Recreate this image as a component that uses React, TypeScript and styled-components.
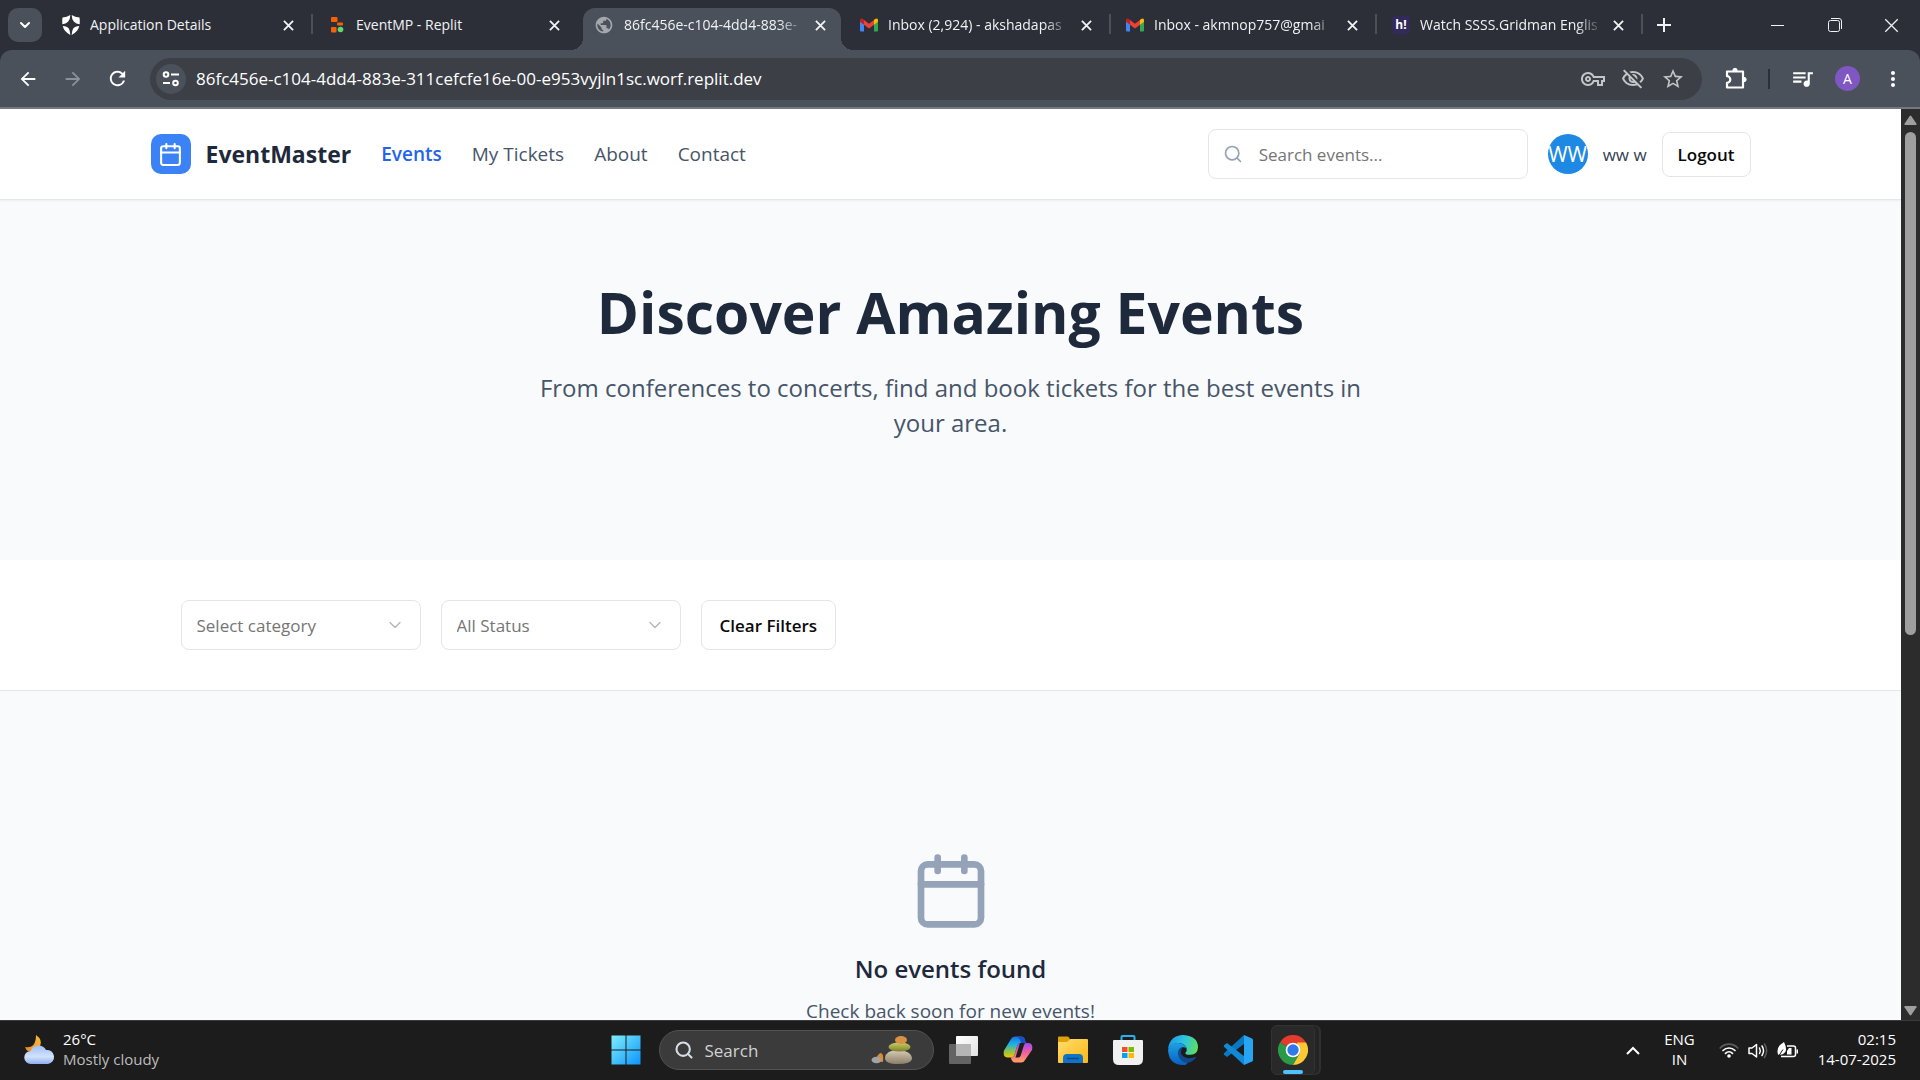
import React from "react";
import styled, { createGlobalStyle, css } from "styled-components";
import { Calendar, Search, ChevronDown } from "lucide-react";
import {
  MdArrowBack,
  MdArrowForward,
  MdRefresh,
  MdStarBorder,
  MdOutlineVisibilityOff,
  MdOutlineVpnKey,
  MdQueueMusic,
  MdMoreVert,
  MdPublic,
} from "react-icons/md";

const GlobalStyle = createGlobalStyle`
  *, *::before, *::after { box-sizing: border-box; }
  body {
    margin: 0;
    background: #1c1c1c;
    font-family: "Open Sans", "Noto Sans", sans-serif;
  }
  button, input, select { font-family: inherit; margin: 0; }
  h1, h2, p { margin: 0; }
  svg { display: block; flex-shrink: 0; }
`;

const Screen = styled.div`
  display: flex;
  flex-direction: column;
  height: 100vh;
  overflow: hidden;
`;

/* ---------- browser: tab strip ---------- */

const TabStrip = styled.div`
  display: flex;
  align-items: stretch;
  height: 50px;
  padding-left: 8px;
  background: #2d2f38;
  color: #f1f2f4;
`;

const TabSearchButton = styled.button`
  display: grid;
  place-items: center;
  align-self: center;
  width: 34px;
  height: 34px;
  margin-right: 4px;
  padding: 0;
  border: 0;
  border-radius: 10px;
  background: #4b515b;
  color: #fff;
`;

const TabCell = styled.div<{ $divider?: boolean }>`
  position: relative;
  display: flex;
  align-items: flex-end;
  flex: 0 1 266px;
  min-width: 0;
  padding: 8px 3px 0 5px;
  ${(p) =>
    p.$divider &&
    css`
      &::after {
        content: "";
        position: absolute;
        right: -1px;
        top: 14px;
        width: 2px;
        height: 20px;
        background: #4b515b;
      }
    `}
`;

const TabBody = styled.div<{ $active?: boolean }>`
  position: relative;
  display: flex;
  align-items: center;
  flex: 1;
  min-width: 0;
  height: 42px;
  padding: 0 11px 8px;
  border-radius: 12px 12px 0 0;
  ${(p) =>
    p.$active &&
    css`
      background: #4b515b;
      &::before,
      &::after {
        content: "";
        position: absolute;
        bottom: 0;
        width: 12px;
        height: 12px;
      }
      &::before {
        right: 100%;
        background: radial-gradient(circle at 0 0, transparent 12px, #4b515b 12px);
      }
      &::after {
        left: 100%;
        background: radial-gradient(circle at 100% 0, transparent 12px, #4b515b 12px);
      }
    `}
`;

const TabTitle = styled.span<{ $fade?: boolean }>`
  flex: 1;
  min-width: 0;
  margin: 0 2px 0 10px;
  overflow: hidden;
  white-space: nowrap;
  font-size: 14px;
  line-height: 20px;
  ${(p) =>
    p.$fade &&
    css`
      mask-image: linear-gradient(to right, #000 84%, transparent 98%);
    `}
`;

const GhostButton = styled.button`
  display: grid;
  place-items: center;
  flex-shrink: 0;
  padding: 0;
  border: 0;
  background: none;
  color: inherit;
`;

const TabClose = styled(GhostButton)`
  width: 20px;
  height: 20px;
`;

const NewTab = styled(GhostButton)`
  width: 44px;
`;

const WindowControls = styled.div`
  display: flex;
  margin-left: auto;
`;

const WindowButton = styled(GhostButton)`
  width: 57px;
`;

/* ---------- browser: toolbar ---------- */

const ToolbarBack = styled.div`
  background: #2d2f38;
`;

const Toolbar = styled.div`
  display: flex;
  align-items: center;
  height: 59px;
  padding: 0 5px;
  border-bottom: 2px solid #747882;
  border-radius: 12px 12px 0 0;
  background: #4b515b;
  color: #fff;
`;

const ToolButton = styled(GhostButton)<{ $dim?: boolean }>`
  width: 45px;
  height: 42px;
  color: ${(p) => (p.$dim ? "#8c9097" : "#fff")};
`;

const AddressBar = styled.div`
  display: flex;
  align-items: center;
  flex: 1;
  min-width: 0;
  height: 42px;
  margin: 0 11px 0 10px;
  padding: 0 9px 0 6px;
  border-radius: 21px;
  background: #3c3f46;
  color: #c3c5c8;
`;

const SiteInfo = styled(GhostButton)`
  width: 30px;
  height: 30px;
  border-radius: 50%;
  background: #4b515b;
  color: #fff;
`;

const UrlInput = styled.input`
  flex: 1;
  min-width: 0;
  padding: 0 10px;
  border: 0;
  outline: 0;
  background: none;
  color: #fff;
  font-size: 17px;
`;

const BarButton = styled(GhostButton)`
  width: 40px;
  height: 40px;
`;

const ToolDivider = styled.span`
  width: 2px;
  height: 20px;
  margin: 0 10px;
  background: #2d2f38;
`;

const Profile = styled(GhostButton)`
  width: 25px;
  height: 25px;
  margin: 0 10px;
  border-radius: 50%;
  background: #7e57c2;
  font-size: 14px;
`;

/* ---------- page ---------- */

const Viewport = styled.div`
  display: flex;
  flex: 1;
  min-height: 0;
`;

const Page = styled.div`
  flex: 1;
  min-width: 0;
  overflow: hidden;
  background: #f8fafc;
`;

const PageHeader = styled.header`
  position: relative;
  border-bottom: 1px solid #e2e8f0;
  background: #fff;
  box-shadow: 0 1px 2px rgba(0, 0, 0, 0.05);
`;

const HeaderInner = styled.div`
  display: flex;
  align-items: center;
  max-width: 1600px;
  margin: 0 auto;
  padding: 20px 0;
`;

const LogoMark = styled.span`
  display: grid;
  place-items: center;
  width: 40px;
  height: 40px;
  margin-right: 15px;
  border-radius: 10px;
  background: #3b82f6;
  color: #fff;
`;

const Brand = styled.span`
  margin-right: 30px;
  color: #1e293b;
  font-size: 23px;
  font-weight: 700;
  line-height: 35px;
`;

const Nav = styled.nav`
  display: flex;
  gap: 30px;
`;

const NavLink = styled.a<{ $current?: boolean }>`
  color: ${(p) => (p.$current ? "#2563eb" : "#475569")};
  font-size: 19px;
  font-weight: ${(p) => (p.$current ? 600 : 400)};
  line-height: 30px;
  text-decoration: none;
`;

const SearchBox = styled.label`
  display: flex;
  align-items: center;
  width: 320px;
  height: 50px;
  margin: 0 20px 0 auto;
  padding: 0 14px;
  border: 1px solid #e5e5e5;
  border-radius: 8px;
  background: #fff;
  color: #94a3b8;
`;

const SearchInput = styled.input`
  flex: 1;
  min-width: 0;
  padding: 0 0 0 16px;
  border: 0;
  outline: 0;
  background: none;
  color: #1e293b;
  font-size: 17px;
  &::placeholder {
    color: #757575;
    opacity: 1;
  }
`;

const Avatar = styled.span`
  display: flex;
  align-items: center;
  justify-content: center;
  width: 40px;
  height: 40px;
  overflow: hidden;
  border-radius: 50%;
  background: #1e88e5;
  color: #fff;
  font-size: 21px;
`;

const UserName = styled.span`
  margin: 0 15px;
  color: #334155;
  font-size: 17px;
`;

const OutlineButton = styled.button<{ $size: "sm" | "md" }>`
  height: ${(p) => (p.$size === "sm" ? 45 : 50)}px;
  padding: 0 ${(p) => (p.$size === "sm" ? 15 : 18)}px;
  border: 1px solid #e5e5e5;
  border-radius: 8px;
  background: #fff;
  color: #0a0a0a;
  font-size: 17px;
  font-weight: 600;
  white-space: nowrap;
`;

const Hero = styled.section`
  display: flex;
  flex-direction: column;
  align-items: center;
  padding: 80px 30px 120px;
  text-align: center;
`;

const HeroTitle = styled.h1`
  margin-bottom: 26px;
  color: #1e293b;
  font-size: 57px;
  font-weight: 700;
  line-height: 64px;
`;

const HeroText = styled.p`
  max-width: 840px;
  color: #475569;
  font-size: 24px;
  line-height: 35px;
`;

const Filters = styled.section`
  border-bottom: 1px solid #e2e8f0;
  background: #fff;
`;

const FiltersInner = styled.div`
  display: flex;
  gap: 20px;
  max-width: 1600px;
  margin: 0 auto;
  padding: 40px 30px;
`;

const SelectBox = styled.div`
  display: grid;
  align-items: center;
  width: 240px;
  height: 50px;
  > * {
    grid-area: 1 / 1;
  }
  > svg {
    justify-self: end;
    margin-right: 16px;
    color: #b4b4b4;
    pointer-events: none;
  }
`;

const Select = styled.select`
  width: 100%;
  height: 100%;
  padding: 0 40px 0 15px;
  border: 1px solid #e5e5e5;
  border-radius: 8px;
  appearance: none;
  background: #fff;
  color: #757575;
  font-size: 17px;
`;

const Empty = styled.section`
  display: flex;
  flex-direction: column;
  align-items: center;
  padding: 160px 30px;
  color: #94a3b8;
`;

const EmptyTitle = styled.h2`
  margin: 20px 0 10px;
  color: #1e293b;
  font-size: 24px;
  font-weight: 600;
  line-height: 35px;
`;

const EmptyText = styled.p`
  color: #475569;
  font-size: 19px;
  line-height: 30px;
`;

const Scrollbar = styled.div`
  display: flex;
  flex-direction: column;
  align-items: center;
  width: 19px;
  padding: 6px 0 4px;
  background: #2c2c2c;
  color: #9f9f9f;
`;

const Track = styled.div`
  flex: 1;
  width: 11px;
  margin: 6px 0;
`;

const Thumb = styled.div`
  height: 58%;
  border-radius: 6px;
  background: #9f9f9f;
`;

/* ---------- taskbar ---------- */

const Taskbar = styled.footer`
  display: grid;
  grid-template-columns: 1fr auto 1fr;
  align-items: center;
  height: 60px;
  border-top: 1px solid #3b3b3b;
  background: #1c1c1c;
  color: #fff;
  font-size: 15px;
  line-height: 20px;
`;

const Weather = styled.div`
  display: flex;
  align-items: center;
  gap: 8px;
  padding-left: 23px;
`;

const SmallLines = styled.div<{ $align?: string }>`
  display: flex;
  flex-direction: column;
  padding-bottom: 3px;
  text-align: ${(p) => p.$align || "left"};
`;

const Muted = styled.span`
  color: #bdbdbd;
`;

const TaskGroup = styled.div`
  display: flex;
  align-items: center;
  padding-bottom: 1px;
`;

const TaskButton = styled(GhostButton)`
  width: 55px;
  height: 55px;
`;

const TaskSearch = styled.label`
  display: flex;
  align-items: center;
  width: 275px;
  height: 40px;
  margin: 0 2px 0 5px;
  padding: 0 20px 0 14px;
  border: 1px solid #525252;
  border-radius: 20px;
  background: #3b3b3b;
`;

const TaskSearchInput = styled.input`
  flex: 1;
  min-width: 0;
  padding: 0 11px;
  border: 0;
  outline: 0;
  background: none;
  font-size: 17px;
  &::placeholder {
    color: #d2d2d2;
    opacity: 1;
  }
`;

const OpenApp = styled(GhostButton)`
  position: relative;
  width: 44px;
  height: 50px;
  margin: 0 7px 0 5px;
  border: 1px solid #333;
  border-radius: 6px;
  background: #292929;
  box-shadow: 5px 0 0 -1px #242424, 6px 0 0 0 #303030;
  &::after {
    content: "";
    position: absolute;
    bottom: 0;
    width: 20px;
    height: 4px;
    border-radius: 2px;
    background: #4cc2ff;
  }
`;

const Tray = styled.div`
  display: flex;
  align-items: center;
  justify-content: flex-end;
  padding-right: 24px;
`;

const TrayIcons = styled.div`
  display: flex;
  align-items: center;
  gap: 9px;
  margin: 0 19px 0 24px;
`;

const TrayChevron = styled(GhostButton)`
  margin-right: 24px;
`;

/* ---------- drawings ---------- */

const Cross = ({ size = 12, w = 2 }: { size?: number; w?: number }) => (
  <svg width={size} height={size} viewBox="0 0 12 12" fill="none" stroke="currentColor" strokeWidth={w}>
    <path d="M1 1l10 10M11 1L1 11" />
  </svg>
);

const ShieldIcon = () => (
  <svg width="18" height="20" viewBox="0 0 18 20" fill="#fff">
    <path d="M0.500 2.500Q5 2 8.300 0Q8.300 4.500 6 6.800Q4 8.800 0.300 9.300Q0 5 0.500 2.500z" />
    <path d="M17.500 2.500Q13 2 9.700 0Q9.700 4.500 12 6.800Q14 8.800 17.700 9.300Q18 5 17.500 2.500z" />
    <path d="M0.700 11Q5 11 6.800 13.500Q8.300 16 8.300 20Q2 16.500 0.700 11z" />
    <path d="M17.300 11Q13 11 11.200 13.500Q9.700 16 9.700 20Q16 16.500 17.300 11z" />
  </svg>
);

const ReplitIcon = () => (
  <svg width="18" height="18" viewBox="0 0 18 18">
    <rect x="3" y="1" width="6.500" height="5" rx="1" fill="#f26207" />
    <rect x="9" y="6.500" width="6" height="3" rx="1" fill="#f26207" />
    <rect x="3" y="11" width="5.500" height="5.500" rx="1" fill="#f26207" />
    <circle cx="12.500" cy="13.500" r="2.800" fill="#5fd876" />
  </svg>
);

const GmailIcon = () => (
  <svg width="18" height="18" viewBox="0 0 18 18">
    <path d="M0 5v9.500q0 1 1 1h3V8z" fill="#4285f4" />
    <path d="M18 5v9.500q0 1-1 1h-3V8z" fill="#34a853" />
    <path d="M4 4v4.800L9 12.500l5-3.700V4L9 7.800z" fill="#ea4335" />
    <path d="M0 4.200v1.600l4 3V4L3 3Q0 1.500 0 4.200z" fill="#c5221f" />
    <path d="M18 4.200v1.600l-4 3V4l1-1Q18 1.500 18 4.200z" fill="#fbbc04" />
  </svg>
);

const StreamMark = styled.span`
  display: grid;
  place-items: center;
  width: 18px;
  height: 18px;
  border-radius: 4px;
  background: #332a5c;
  color: #fff;
  font-size: 12px;
  font-weight: 700;
  line-height: 18px;
`;

const TuneIcon = () => (
  <svg width="18" height="18" viewBox="0 0 18 18" fill="none" stroke="currentColor" strokeWidth="2">
    <circle cx="4" cy="4.500" r="2.300" />
    <path d="M9 4.500h8M1 13h7" />
    <circle cx="13.500" cy="13" r="2.300" />
  </svg>
);

const PuzzleIcon = () => (
  <svg width="24" height="24" viewBox="0 0 24 24" fill="none" stroke="currentColor" strokeWidth="2.200" strokeLinejoin="round">
    <path d="M3 4.500h16v16H3v-4.700a3.300 3.300 0 0 0 0-6.600z" />
    <path d="M8.800 3.500a2.200 2.200 0 0 1 4.400 0zM20 10.300a2.200 2.200 0 0 1 0 4.400z" fill="currentColor" strokeWidth="1" />
  </svg>
);

const CloudMoon = () => (
  <svg width="32" height="32" viewBox="0 0 32 32">
    <defs>
      <linearGradient id="cloud" x1="0" y1="0" x2="0" y2="1">
        <stop offset="0" stopColor="#9dbef4" />
        <stop offset=".6" stopColor="#d3e2fb" />
        <stop offset="1" stopColor="#8fb0ee" />
      </linearGradient>
      <linearGradient id="moon" x1="1" y1="0" x2="0" y2="1">
        <stop offset="0" stopColor="#f8c03a" />
        <stop offset="1" stopColor="#f0861c" />
      </linearGradient>
    </defs>
    <path d="M13 0q7 5 4 11q-5 7-12 5q-2-1-3-4q11 2 11-12z" fill="url(#moon)" />
    <path d="M8 29a6.500 6.500 0 0 1-.5-13A8.500 8.500 0 0 1 23 15a7 7 0 0 1 2 14z" fill="url(#cloud)" />
  </svg>
);

const WindowsLogo = () => (
  <svg width="30" height="30" viewBox="0 0 30 30">
    <defs>
      <linearGradient id="win" x1="0" y1="0" x2="30" y2="30" gradientUnits="userSpaceOnUse">
        <stop offset="0" stopColor="#7ff0fd" />
        <stop offset="1" stopColor="#0b93fb" />
      </linearGradient>
    </defs>
    <path d="M.5.500h14v14H.5zM15.500.500h14v14h-14zM.5 15.500h14v14H.5zM15.500 15.500h14v14h-14z" fill="url(#win)" />
  </svg>
);

const Stones = () => (
  <svg width="42" height="28" viewBox="0 0 42 28">
    <defs>
      <linearGradient id="stone" x1="0" y1="0" x2="0" y2="1">
        <stop offset="0" stopColor="#d8ccb6" />
        <stop offset="1" stopColor="#8b7e6a" />
      </linearGradient>
      <linearGradient id="olive" x1="0" y1="0" x2="0" y2="1">
        <stop offset="0" stopColor="#c9cf62" />
        <stop offset="1" stopColor="#7d7f2c" />
      </linearGradient>
    </defs>
    <path d="M4 25q3-8 6-8q3 1 2 9z" fill="#d98b36" />
    <ellipse cx="5.500" cy="24" rx="5" ry="3.200" fill="#a3a3a3" />
    <path d="M14 22q1-8 13-8q14 1 14 9q-1 5-14 5q-13 0-13-6z" fill="url(#stone)" />
    <ellipse cx="28.500" cy="11" rx="11" ry="4.500" fill="url(#olive)" />
    <ellipse cx="30" cy="4" rx="6" ry="4" fill="#d99245" />
  </svg>
);

const TaskView = () => (
  <svg width="30" height="30" viewBox="0 0 30 30">
    <defs>
      <linearGradient id="tv" x1="0" y1="0" x2="1" y2="1">
        <stop offset="0" stopColor="#fff" />
        <stop offset="1" stopColor="#e2e2e2" />
      </linearGradient>
    </defs>
    <rect x="1" y="9" width="22" height="20" rx="1" fill="#636363" />
    <rect x="8" y="1" width="22" height="20" rx="1" fill="url(#tv)" />
    <rect x="8" y="9" width="15" height="12" fill="#b5b5b5" />
  </svg>
);

const Copilot = () => (
  <svg width="30" height="28" viewBox="0 0 30 28">
    <defs>
      <linearGradient id="cpa" x1="0" y1="0" x2="0" y2="1">
        <stop offset="0" stopColor="#1b6fe0" />
        <stop offset=".35" stopColor="#19b0e8" />
        <stop offset=".7" stopColor="#8bc34a" />
        <stop offset="1" stopColor="#f5c400" />
      </linearGradient>
      <linearGradient id="cpb" x1="0" y1="0" x2="0" y2="1">
        <stop offset="0" stopColor="#a348f0" />
        <stop offset=".5" stopColor="#f0609c" />
        <stop offset="1" stopColor="#ffa45c" />
      </linearGradient>
    </defs>
    <path d="M8 3q1-2.500 4-2.500h6q3 0 3.800 3l1 3.500H18q-3 0-4 3.500l-2.600 8.500q-.8 2.500-3.400 2.500H5q-5.500 0-4-7z" fill="url(#cpa)" />
    <path d="M22 24q-1 2.500-4 2.500h-6q-2.500 0-3.500-2.700L7.800 21.500q2.800 0 3.600-2.500l2.600-8.500Q15 7 18 7h7q5.500 0 4 7z" fill="url(#cpb)" />
    <path d="M17 7l-4.500 14.500h2.800q1.800 0 2.400-2L21 9q.5-2 1.800-2z" fill="#1c1c1c" />
    <path d="M12 .500h6q3 0 3.800 3l1 3.500H18q-1.500-6.500-6-6.500z" fill="#1a4fc4" />
  </svg>
);

const FolderIcon = () => (
  <svg width="30" height="28" viewBox="0 0 30 28">
    <defs>
      <linearGradient id="fold" x1="0" y1="0" x2="1" y2="1">
        <stop offset="0" stopColor="#ffdc6e" />
        <stop offset="1" stopColor="#fbb914" />
      </linearGradient>
    </defs>
    <path d="M0 1.500Q0 .500 1 .500h8.500q1 0 1.500 1l1.500 2.500L10 7H0z" fill="#dfa009" />
    <path d="M0 6h9l3.500-3H29q1 0 1 1v22q0 1-1 1H1q-1 0-1-1z" fill="url(#fold)" />
    <path d="M5 27v-5q0-4 4-4h12q4 0 4 4v5z" fill="#0f74c8" />
    <path d="M9 22.500h12" stroke="#0a4a86" strokeWidth="1.500" />
  </svg>
);

const StoreIcon = () => (
  <svg width="30" height="30" viewBox="0 0 30 30">
    <path d="M8.500 6V2q0-1 1-1h11q1 0 1 1v4" fill="none" stroke="#27b1f0" strokeWidth="2" />
    <path d="M0 6q0-1 1-1h28q1 0 1 1v18q0 6-6 6H6q-6 0-6-6z" fill="#f1f1f1" />
    <rect x="9" y="12" width="5.500" height="5" fill="#f25022" />
    <rect x="15.500" y="12" width="5.500" height="5" fill="#7fba00" />
    <rect x="9" y="18" width="5.500" height="5" fill="#00a4ef" />
    <rect x="15.500" y="18" width="5.500" height="5" fill="#ffb900" />
  </svg>
);

const EdgeIcon = () => (
  <svg width="30" height="30" viewBox="0 0 30 30">
    <defs>
      <linearGradient id="ea" x1="0" y1=".4" x2="1" y2=".6">
        <stop offset="0" stopColor="#1f9be6" />
        <stop offset=".5" stopColor="#2ec4e0" />
        <stop offset="1" stopColor="#5fe05a" />
      </linearGradient>
      <linearGradient id="eb" x1="0" y1="0" x2="0" y2="1">
        <stop offset="0" stopColor="#1ba2e6" />
        <stop offset="1" stopColor="#0a5fc0" />
      </linearGradient>
    </defs>
    <path d="M0 14Q2 0 15.500 0Q30 1 30 12.500Q29.500 19.500 22.500 19.800Q17 20 17.300 18Q19.500 16 18.500 13Q17 8.500 10.500 8Q3 8 0 14z" fill="url(#ea)" />
    <path d="M0 15Q1.500 8 9.500 8Q17 8.500 18.500 13Q12 10.500 10.500 17Q10 26 20 27.500L18 29.700Q1 31.500 0 15z" fill="url(#eb)" />
    <path d="M10.500 15.500Q9 22 14 26Q21 31 28 22.500Q28 21.500 27 22Q18 25.500 13.500 19.500Q12 16.500 14.500 12.500Q11.500 12.500 10.500 15.500z" fill="#114a8b" />
  </svg>
);

const CodeIcon = () => (
  <svg width="30" height="30" viewBox="0 0 30 30">
    <path d="M21 0l.5 8.500L4 22l-3-2.300Q.500 19 1 18.300z" fill="#0a78c4" />
    <path d="M21 30l.5-8.500L4 8L1 10.300Q.500 11 1 11.700z" fill="#1189d6" />
    <path d="M21 0l8 3.500q1 .5 1 1.500v20q0 1-1 1.500L21 30z" fill="#27a4f2" />
  </svg>
);

const ChromeIcon = () => (
  <svg width="30" height="30" viewBox="0 0 30 30">
    <path d="M15 15L2 7.500A15 15 0 0 1 28 7.500z" fill="#e33b2e" />
    <path d="M2 7.500A15 15 0 0 0 15 30L21.500 18.700L15 15z" fill="#2a9a48" />
    <path d="M28 7.500A15 15 0 0 1 15 30L21.500 18.700L19 7.500z" fill="#fcc934" />
    <circle cx="15" cy="15" r="7.300" fill="#fff" />
    <circle cx="15" cy="15" r="5.700" fill="#3078ee" />
  </svg>
);

const WifiIcon = () => (
  <svg width="20" height="18" viewBox="0 0 20 18" fill="none" strokeWidth="1.700" strokeLinecap="round">
    <path d="M1.200 6a12 12 0 0 1 17.600 0" stroke="#5c5c5c" />
    <path d="M4 8.500a8.500 8.500 0 0 1 12 0M6.500 11.300a5 5 0 0 1 7 0" stroke="#fff" />
    <circle cx="10" cy="14" r="1.800" fill="#fff" />
  </svg>
);

const VolumeIcon = () => (
  <svg width="20" height="18" viewBox="0 0 20 18" fill="none" strokeWidth="1.500" strokeLinecap="round" strokeLinejoin="round">
    <path d="M1 6h3L8.500 2.500v12.500L4 11.500H1zM11.500 6q1.500 2.700 0 5.500M14 4q3 4.700 0 9.500" stroke="#fff" />
    <path d="M16.500 2q4.300 6.700 0 13.500" stroke="#5c5c5c" />
  </svg>
);

const BatteryIcon = () => (
  <svg width="22" height="18" viewBox="0 0 22 18">
    <path d="M10 4h6.500q2 0 2 2v6.500q0 2-2 2H4" fill="none" stroke="#fff" strokeWidth="1.500" />
    <path d="M19.500 7.500h1.500v4h-1.500zM10 12.500V9l2-3h2.500v6.500z" fill="#fff" />
    <path d="M1 12.500q-1.500-6 2-9.500L7 0q3 6 1.500 9.500Q6 13.500 1 12.500z" fill="#fff" />
    <path d="M2 13.500l4-6" stroke="#1c1c1c" />
  </svg>
);

const Triangle = ({ down }: { down?: boolean }) => (
  <svg width="13" height="11" viewBox="0 0 13 11" fill="currentColor">
    <path d={down ? "M1 1h11q1 .5.500 1.300L7.300 10q-.8.800-1.600 0L.5 2.300Q0 1.500 1 1z" : "M1 10h11q1-.5.500-1.300L7.300 1q-.8-.8-1.600 0L.5 8.700Q0 9.500 1 10z"} />
  </svg>
);

/* ---------- screen ---------- */

const tabs = [
  { title: "Application Details", icon: <ShieldIcon />, divider: true },
  { title: "EventMP - Replit", icon: <ReplitIcon /> },
  { title: "86fc456e-c104-4dd4-883e-", icon: <MdPublic size={20} color="#a4a8ad" />, active: true, fade: true },
  { title: "Inbox (2,924) - akshadapas", icon: <GmailIcon />, divider: true, fade: true },
  { title: "Inbox - akmnop757@gmai", icon: <GmailIcon />, divider: true, fade: true },
  { title: "Watch SSSS.Gridman Englis", icon: <StreamMark>h!</StreamMark>, divider: true, fade: true },
];

const links = ["Events", "My Tickets", "About", "Contact"];

const apps = [
  { name: "Task view", icon: <TaskView /> },
  { name: "Copilot", icon: <Copilot /> },
  { name: "File Explorer", icon: <FolderIcon /> },
  { name: "Store", icon: <StoreIcon /> },
  { name: "Edge", icon: <EdgeIcon /> },
  { name: "Code", icon: <CodeIcon /> },
];

export default function App() {
  return (
    <Screen>
      <GlobalStyle />
      <TabStrip>
        <TabSearchButton aria-label="Search tabs">
          <ChevronDown size={16} strokeWidth={3} />
        </TabSearchButton>
        {tabs.map((t) => (
          <TabCell key={t.title} $divider={t.divider}>
            <TabBody $active={t.active}>
              {t.icon}
              <TabTitle $fade={t.fade}>{t.title}</TabTitle>
              <TabClose aria-label="Close tab">
                <Cross size={11} />
              </TabClose>
            </TabBody>
          </TabCell>
        ))}
        <NewTab aria-label="New tab">
          <svg width="14" height="14" viewBox="0 0 14 14" stroke="currentColor" strokeWidth="2">
            <path d="M7 0v14M0 7h14" />
          </svg>
        </NewTab>
        <WindowControls>
          <WindowButton aria-label="Minimize">
            <svg width="13" height="13" viewBox="0 0 13 13" stroke="currentColor">
              <path d="M0 6.500h13" />
            </svg>
          </WindowButton>
          <WindowButton aria-label="Restore">
            <svg width="14" height="14" viewBox="0 0 14 14" fill="none" stroke="currentColor">
              <rect x=".5" y="2.500" width="11" height="11" rx="2" />
              <path d="M3 .500h8q2.500 0 2.500 2.500v8" />
            </svg>
          </WindowButton>
          <WindowButton aria-label="Close window">
            <Cross size={15} w={1} />
          </WindowButton>
        </WindowControls>
      </TabStrip>

      <ToolbarBack>
        <Toolbar>
          <ToolButton aria-label="Back"><MdArrowBack size={22} /></ToolButton>
          <ToolButton aria-label="Forward" $dim><MdArrowForward size={22} /></ToolButton>
          <ToolButton aria-label="Reload"><MdRefresh size={23} /></ToolButton>
          <AddressBar>
            <SiteInfo aria-label="Site information"><TuneIcon /></SiteInfo>
            <UrlInput aria-label="Address" defaultValue="86fc456e-c104-4dd4-883e-311cefcfe16e-00-e953vyjln1sc.worf.replit.dev" />
            <BarButton aria-label="Passwords"><MdOutlineVpnKey size={24} /></BarButton>
            <BarButton aria-label="Tracking protection"><MdOutlineVisibilityOff size={24} /></BarButton>
            <BarButton aria-label="Bookmark"><MdStarBorder size={24} /></BarButton>
          </AddressBar>
          <ToolButton aria-label="Extensions"><PuzzleIcon /></ToolButton>
          <ToolDivider />
          <ToolButton aria-label="Media"><MdQueueMusic size={25} /></ToolButton>
          <Profile aria-label="Profile">A</Profile>
          <ToolButton aria-label="Menu"><MdMoreVert size={24} /></ToolButton>
        </Toolbar>
      </ToolbarBack>

      <Viewport>
        <Page>
          <PageHeader>
            <HeaderInner>
              <LogoMark><Calendar size={25} /></LogoMark>
              <Brand>EventMaster</Brand>
              <Nav>
                {links.map((l, i) => (
                  <NavLink key={l} href="#" $current={i === 0}>{l}</NavLink>
                ))}
              </Nav>
              <SearchBox>
                <Search size={20} />
                <SearchInput aria-label="Search events" placeholder="Search events..." />
              </SearchBox>
              <Avatar>WW</Avatar>
              <UserName>ww w</UserName>
              <OutlineButton $size="sm">Logout</OutlineButton>
            </HeaderInner>
          </PageHeader>

          <Hero>
            <HeroTitle>Discover Amazing Events</HeroTitle>
            <HeroText>
              From conferences to concerts, find and book tickets for the best events in your area.
            </HeroText>
          </Hero>

          <Filters>
            <FiltersInner>
              <SelectBox>
                <Select aria-label="Category" defaultValue="">
                  <option value="">Select category</option>
                </Select>
                <ChevronDown size={20} strokeWidth={1.5} />
              </SelectBox>
              <SelectBox>
                <Select aria-label="Status" defaultValue="">
                  <option value="">All Status</option>
                </Select>
                <ChevronDown size={20} strokeWidth={1.5} />
              </SelectBox>
              <OutlineButton $size="md">Clear Filters</OutlineButton>
            </FiltersInner>
          </Filters>

          <Empty>
            <Calendar size={80} />
            <EmptyTitle>No events found</EmptyTitle>
            <EmptyText>Check back soon for new events!</EmptyText>
          </Empty>
        </Page>
        <Scrollbar aria-hidden="true">
          <Triangle />
          <Track><Thumb /></Track>
          <Triangle down />
        </Scrollbar>
      </Viewport>

      <Taskbar>
        <Weather>
          <CloudMoon />
          <SmallLines>
            <span>26°C</span>
            <Muted>Mostly cloudy</Muted>
          </SmallLines>
        </Weather>
        <TaskGroup>
          <TaskButton aria-label="Start"><WindowsLogo /></TaskButton>
          <TaskSearch>
            <Search size={20} color="#d8dde6" strokeWidth={2.5} />
            <TaskSearchInput aria-label="Search" placeholder="Search" />
            <Stones />
          </TaskSearch>
          {apps.map((a) => (
            <TaskButton key={a.name} aria-label={a.name}>{a.icon}</TaskButton>
          ))}
          <OpenApp aria-label="Chrome"><ChromeIcon /></OpenApp>
        </TaskGroup>
        <Tray>
          <TrayChevron aria-label="Hidden icons">
            <svg width="14" height="9" viewBox="0 0 14 9" fill="none" stroke="#fff" strokeWidth="2">
              <path d="M1 8l6-6 6 6" />
            </svg>
          </TrayChevron>
          <SmallLines $align="center">
            <span>ENG</span>
            <span>IN</span>
          </SmallLines>
          <TrayIcons>
            <WifiIcon />
            <VolumeIcon />
            <BatteryIcon />
          </TrayIcons>
          <SmallLines $align="right">
            <span>02:15</span>
            <span>14-07-2025</span>
          </SmallLines>
        </Tray>
      </Taskbar>
    </Screen>
  );
}
